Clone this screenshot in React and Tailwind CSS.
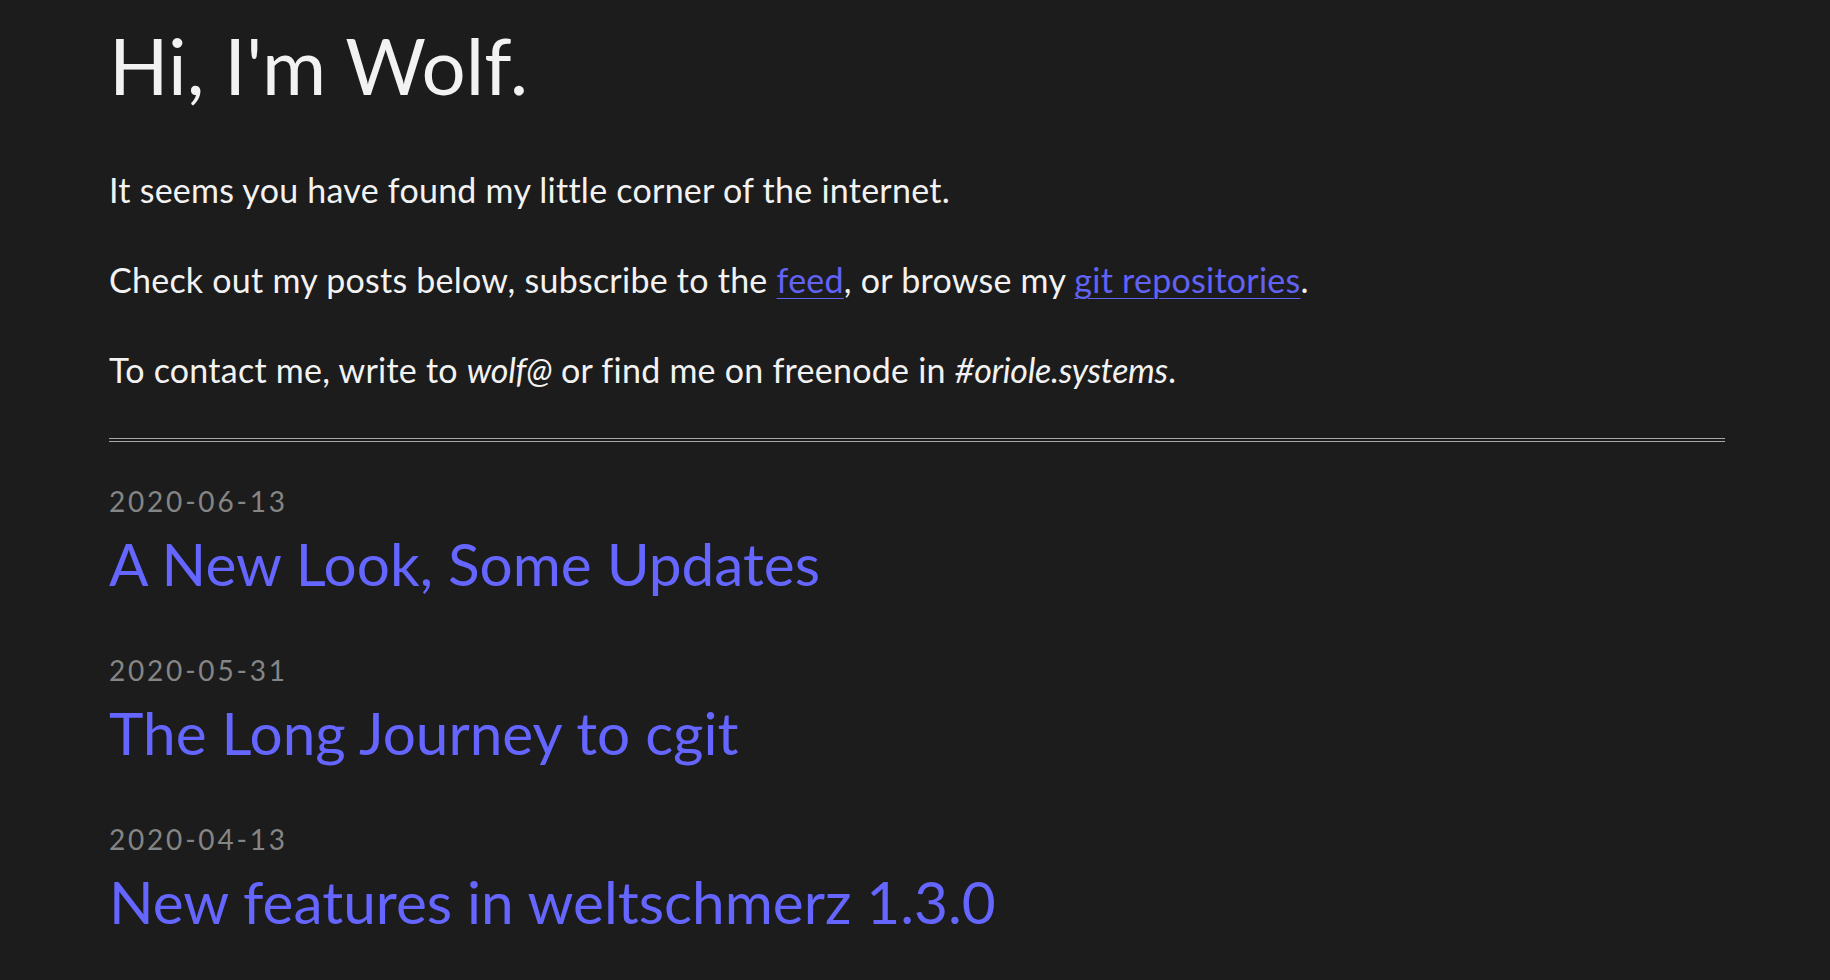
const posts = [
  { date: '2020-06-13', title: 'A New Look, Some Updates' },
  { date: '2020-05-31', title: 'The Long Journey to cgit' },
  { date: '2020-04-13', title: 'New features in weltschmerz 1.3.0' },
];

export default function App() {
  return (
    <div className="min-h-[980px] bg-[#1c1c1c] text-[#f2f2f2] font-['Lato','Liberation_Sans',sans-serif]">
      <main className="pl-[109px] pr-[105px] pt-[26px] pb-10">
        <h1 className="text-[78px] leading-none font-normal">Hi, I'm Wolf.</h1>

        <div className="mt-[66px] flex flex-col gap-[50px] text-[34px] leading-[40px] tracking-[0.25px]">
          <p>It seems you have found my little corner of the internet.</p>
          <p>
            Check out my posts below, subscribe to the{' '}
            <a href="#" className="text-[#6262f5] underline decoration-1 underline-offset-[5px]">feed</a>, or browse my{' '}
            <a href="#" className="text-[#6262f5] underline decoration-1 underline-offset-[5px]">git repositories</a>.
          </p>
          <p>
            To contact me, write to <em className="tracking-[-0.3px]">wolf@</em> or find me on freenode in{' '}
            <em className="tracking-[-0.3px]">#oriole.systems</em>.
          </p>
        </div>

        <hr className="mt-[48px] h-[4px] border-0 border-y border-[#a8a8a8]" />

        <ul className="mt-[45px] flex flex-col gap-[64px]">
          {posts.map((p) => (
            <li key={p.date}>
              <div className="text-[28px] leading-[28px] tracking-[2.8px] text-[#858585]">{p.date}</div>
              <a href="#" className="mt-[19px] block text-[58.5px] leading-[58px] text-[#6565ff]">
                {p.title}
              </a>
            </li>
          ))}
        </ul>
      </main>
    </div>
  );
}
